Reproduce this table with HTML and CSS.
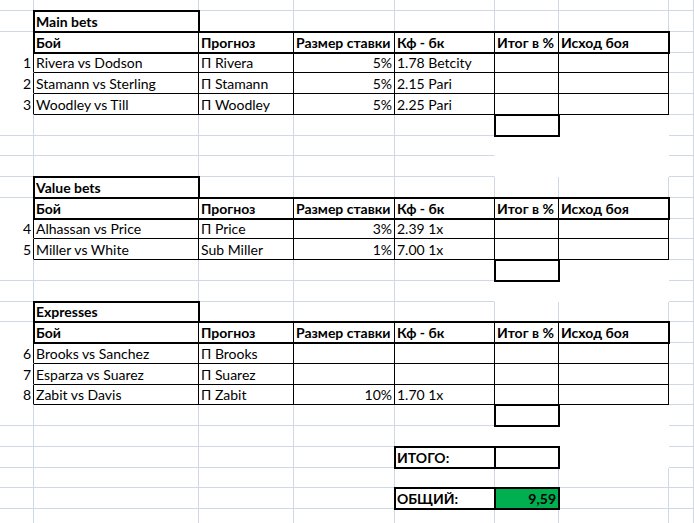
FILE: index.html
```html
<!DOCTYPE html>
<html lang="ru">
<head>
<meta charset="utf-8">
<title>Bets</title>
<link rel="stylesheet" href="styles.css">
</head>
<body>
<div class="sheet">
<div class="c"></div><div class="c"></div><div class="c"></div><div class="c"></div><div class="c"></div><div class="c"></div><div class="c"></div><div class="c"></div>

<div class="c"></div><div class="c box">Main bets</div><div class="c"></div><div class="c"></div><div class="c"></div><div class="c"></div><div class="c"></div><div class="c"></div>
<div class="c nb"></div><div class="c h hl">Бой</div><div class="c h">Прогноз</div><div class="c h">Размер ставки</div><div class="c h">Кф - бк</div><div class="c h">Итог в %</div><div class="c h hr">Исход боя</div><div class="c"></div>
<div class="c w a">1</div><div class="c d">Rivera vs Dodson</div><div class="c d">П Rivera</div><div class="c d num">5%</div><div class="c d">1.78 Betcity</div><div class="c d"></div><div class="c d"></div><div class="c"></div>
<div class="c w a">2</div><div class="c d">Stamann vs Sterling</div><div class="c d">П Stamann</div><div class="c d num">5%</div><div class="c d">2.15 Pari</div><div class="c d"></div><div class="c d"></div><div class="c"></div>
<div class="c w a">3</div><div class="c d">Woodley vs Till</div><div class="c d">П Woodley</div><div class="c d num">5%</div><div class="c d">2.25 Pari</div><div class="c d"></div><div class="c d"></div><div class="c"></div>
<div class="c"></div><div class="c"></div><div class="c"></div><div class="c"></div><div class="c"></div><div class="c box"></div><div class="c w"></div><div class="c"></div>
<div class="c"></div><div class="c"></div><div class="c"></div><div class="c"></div><div class="c nr"></div><div class="c w"></div><div class="c w"></div><div class="c"></div>
<div class="c"></div><div class="c"></div><div class="c"></div><div class="c"></div><div class="c nr"></div><div class="c w"></div><div class="c w"></div><div class="c"></div>

<div class="c"></div><div class="c box">Value bets</div><div class="c"></div><div class="c"></div><div class="c"></div><div class="c"></div><div class="c"></div><div class="c"></div>
<div class="c nb"></div><div class="c h hl">Бой</div><div class="c h">Прогноз</div><div class="c h">Размер ставки</div><div class="c h">Кф - бк</div><div class="c h">Итог в %</div><div class="c h hr">Исход боя</div><div class="c"></div>
<div class="c w a">4</div><div class="c d">Alhassan vs Price</div><div class="c d">П Price</div><div class="c d num">3%</div><div class="c d">2.39 1x</div><div class="c d"></div><div class="c d"></div><div class="c"></div>
<div class="c w a">5</div><div class="c d">Miller vs White</div><div class="c d">Sub Miller</div><div class="c d num">1%</div><div class="c d">7.00 1x</div><div class="c d"></div><div class="c d"></div><div class="c"></div>
<div class="c"></div><div class="c"></div><div class="c"></div><div class="c"></div><div class="c"></div><div class="c box"></div><div class="c w"></div><div class="c"></div>
<div class="c"></div><div class="c"></div><div class="c"></div><div class="c"></div><div class="c nr"></div><div class="c w"></div><div class="c w"></div><div class="c"></div>

<div class="c"></div><div class="c box">Expresses</div><div class="c"></div><div class="c"></div><div class="c"></div><div class="c"></div><div class="c"></div><div class="c"></div>
<div class="c nb"></div><div class="c h hl">Бой</div><div class="c h">Прогноз</div><div class="c h">Размер ставки</div><div class="c h">Кф - бк</div><div class="c h">Итог в %</div><div class="c h hr">Исход боя</div><div class="c"></div>
<div class="c w a">6</div><div class="c d">Brooks vs Sanchez</div><div class="c d">П Brooks</div><div class="c d num"></div><div class="c d"></div><div class="c d"></div><div class="c d"></div><div class="c"></div>
<div class="c w a">7</div><div class="c d">Esparza vs Suarez</div><div class="c d">П Suarez</div><div class="c d num"></div><div class="c d"></div><div class="c d"></div><div class="c d"></div><div class="c"></div>
<div class="c w a">8</div><div class="c d">Zabit vs Davis</div><div class="c d">П Zabit</div><div class="c d num">10%</div><div class="c d">1.70 1x</div><div class="c d"></div><div class="c d"></div><div class="c"></div>
<div class="c"></div><div class="c"></div><div class="c"></div><div class="c"></div><div class="c"></div><div class="c box"></div><div class="c w"></div><div class="c"></div>
<div class="c"></div><div class="c"></div><div class="c"></div><div class="c"></div><div class="c nr"></div><div class="c w"></div><div class="c w"></div><div class="c"></div>

<div class="c"></div><div class="c"></div><div class="c"></div><div class="c"></div><div class="c box">ИТОГО:</div><div class="c box"></div><div class="c w"></div><div class="c"></div>
<div class="c"></div><div class="c"></div><div class="c"></div><div class="c"></div><div class="c"></div><div class="c"></div><div class="c"></div><div class="c"></div>
<div class="c"></div><div class="c"></div><div class="c"></div><div class="c"></div><div class="c box">ОБЩИЙ:</div><div class="c box num green">9,59</div><div class="c"></div><div class="c"></div>
<div class="c"></div><div class="c"></div><div class="c"></div><div class="c"></div><div class="c"></div><div class="c"></div><div class="c"></div><div class="c"></div>
</div>
</body>
</html>
```

FILE: styles.css
```css
* {
  box-sizing: border-box;
}

html,
body {
  margin: 0;
  height: 523px;
  overflow: hidden;
  background: #fff;
}

.sheet {
  display: grid;
  grid-template-columns: 34px 165px 95px 101px 100px 64px 110px 1fr;
  grid-template-rows: 11px repeat(6, 21px 21px 20px 21px) 21px;
  font-family: Lato, "Liberation Sans", sans-serif;
  font-size: 14px;
  color: #000;
}

.c {
  display: flex;
  align-items: flex-end;
  padding: 0 2px 1px;
  line-height: 16px;
  white-space: nowrap;
  border-right: 1px solid #d0d7e5;
  border-bottom: 1px solid #d0d7e5;
}

.nr {
  border-right-color: transparent;
}

.nb {
  border-bottom-color: transparent;
}

.w {
  border-color: transparent;
}

.a {
  border-right-color: #000;
  justify-content: flex-end;
}

.num {
  justify-content: flex-end;
}

.d {
  border-right-color: #000;
  border-bottom-color: #000;
}

.h {
  position: relative;
  z-index: 1;
  font-weight: bold;
  border-right-color: #000;
  border-bottom-color: #000;
  box-shadow: 0 -1px #000, 0 1px #000, inset 0 1px #000;
}

.hl {
  box-shadow: -1px 0 #000, -1px -1px #000, -1px 1px #000, 0 -1px #000, 0 1px #000, inset 1px 1px #000;
}

.hr {
  box-shadow: 1px 0 #000, 1px -1px #000, 1px 1px #000, 0 -1px #000, 0 1px #000, inset 0 1px #000;
}

.box {
  position: relative;
  z-index: 2;
  font-weight: bold;
  border-right-color: #000;
  border-bottom-color: #000;
  box-shadow: 0 0 0 1px #000, inset 1px 1px #000;
}

.green {
  background: #00b050;
}
```
